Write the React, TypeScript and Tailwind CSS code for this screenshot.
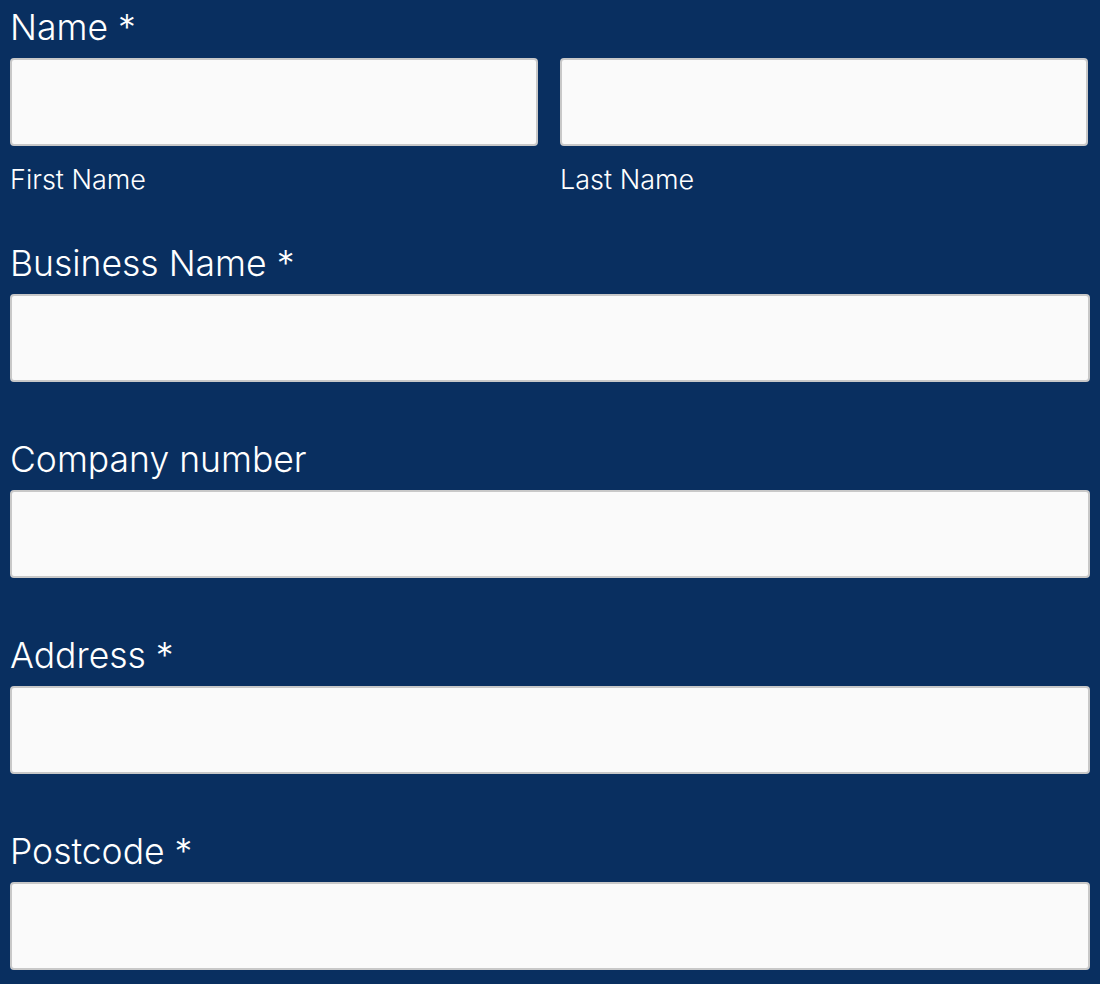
import React from "react";

const inputClass =
  "block h-[88px] w-full rounded-[4px] border-2 border-[#c8c8c8] bg-[#fafafa] px-4 text-[26px] text-gray-900 outline-none";

const labelClass =
  "block pt-[5px] pb-[7px] text-[35.5px] font-light leading-[46px] text-white";

function Field({ label, required }: { label: string; required?: boolean }) {
  return (
    <div className="mb-[50px]">
      <label className={labelClass}>
        {label}
        {required && " *"}
      </label>
      <input type="text" className={inputClass} />
    </div>
  );
}

export default function App() {
  return (
    <div
      className="min-h-[984px] w-[1100px] bg-[#092f60] px-[10px]"
      style={{ fontFamily: "Inter, 'Noto Sans', sans-serif" }}
    >
      <div className="mb-[38px]">
        <label className={labelClass}>Name *</label>
        <div className="flex gap-[22px]">
          <div className="w-[528px]">
            <input type="text" className={inputClass} />
            <div className="pt-[16px] text-[27px] font-light leading-[36px] text-white">
              First Name
            </div>
          </div>
          <div className="w-[528px]">
            <input type="text" className={inputClass} />
            <div className="pt-[16px] text-[27px] font-light leading-[36px] text-white">
              Last Name
            </div>
          </div>
        </div>
      </div>
      <Field label="Business Name" required />
      <Field label="Company number" />
      <Field label="Address" required />
      <Field label="Postcode" required />
    </div>
  );
}
